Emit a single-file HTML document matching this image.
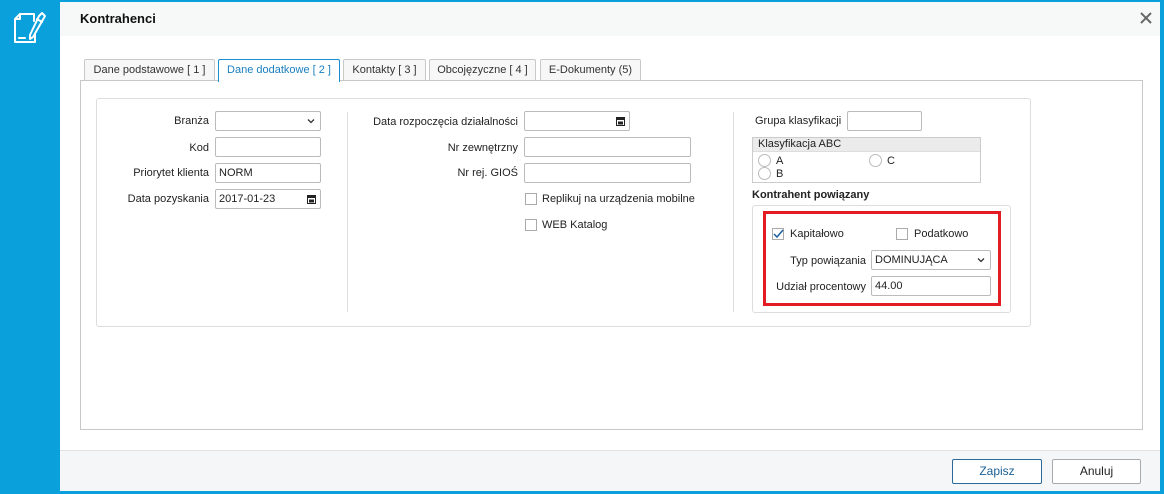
<!DOCTYPE html><html><head><meta charset="utf-8"><style>
*{box-sizing:border-box;margin:0;padding:0}
body{width:1164px;height:494px;background:#0aa0dc;font-family:"Liberation Sans",sans-serif;font-size:11px;color:#222;position:relative;overflow:hidden}
.a{position:absolute}
.win{left:60px;top:2px;width:1100px;height:489px;background:#fff}
.hdr{left:60px;top:2px;width:1100px;height:34px;background:#f7f8f8}
.ftr{left:60px;top:450px;width:1100px;height:41px;background:#f5f6f7;border-top:1px solid #e2e2e2}
.tab{top:59px;height:22px;border:1px solid #c8c8c8;border-bottom:none;background:#f7f7f7;font-size:11px;color:#333;text-align:center;line-height:21px;border-radius:2px 2px 0 0}
.in{height:20px;border:1px solid #bbb;border-radius:2px;background:#fff;font-size:11px;line-height:18px;padding-left:3px}
.lb{text-align:right;font-size:11px}
.cb{width:12px;height:12px;border:1px solid #aaa;background:#fff}
.rd{width:13px;height:13px;border:1px solid #bbb;border-radius:50%}
.btn{top:459px;height:25px;border:1px solid #aaa;border-radius:2px;text-align:center;line-height:23px;font-size:12px;background:#fff}
.ch{position:absolute;right:5px;top:6px}
.cal{position:absolute;right:4px;top:5px}
</style></head><body>
<div class="a win"></div><div class="a hdr"></div>
<svg class="a" style="left:0;top:0" width="60" height="50" viewBox="0 0 60 50" fill="none" stroke="#fff" stroke-width="2" stroke-linejoin="round" stroke-linecap="round"><path d="M15 19 L20 14 H34 V21"/><path d="M15 19 V42 H35 V34"/><path d="M15 19 H20 V14"/><path d="M19 38 H25"/><path d="M39 16 L42 13 L45 16 L33 37 L30 39 L30 35 Z"/><path d="M37 19 L42 22"/></svg>
<div class="a" style="left:80px;top:11px;font-size:13px;font-weight:bold;color:#111">Kontrahenci</div>
<svg class="a" style="left:1140px;top:12px" width="12" height="12" viewBox="0 0 12 12" stroke="#666" stroke-width="2"><path d="M1 1 L11 11 M11 1 L1 11"/></svg>
<div class="a tab" style="left:84px;width:131px">Dane podstawowe [ 1 ]</div>
<div class="a tab" style="left:218px;width:122px;background:#fff;color:#1a7fbf;border-color:#1a8fcf;height:23px;z-index:2">Dane dodatkowe [ 2 ]</div>
<div class="a tab" style="left:343px;width:83px">Kontakty [ 3 ]</div>
<div class="a tab" style="left:429px;width:107px">Obcojęzyczne [ 4 ]</div>
<div class="a tab" style="left:540px;width:101px">E-Dokumenty (5)</div>
<div class="a" style="left:80px;top:80px;width:1063px;height:350px;border:1px solid #c8c8c8"></div>
<div class="a" style="left:96px;top:98px;width:935px;height:229px;border:1px solid #ddd;border-radius:3px"></div>
<div class="a" style="left:347px;top:112px;width:1px;height:200px;background:#ddd"></div>
<div class="a" style="left:733px;top:112px;width:1px;height:200px;background:#ddd"></div>
<div class="a lb" style="left:100px;width:109px;top:115px">Branża</div>
<div class="a in" style="left:215px;top:111px;width:106px"><svg class="ch" width="8" height="6" viewBox="0 0 8 6" fill="none" stroke="#333" stroke-width="1.3"><path d="M1 1.5 L4 4.5 L7 1.5"/></svg></div>
<div class="a lb" style="left:100px;width:109px;top:142px">Kod</div>
<div class="a in" style="left:215px;top:137px;width:106px"></div>
<div class="a lb" style="left:100px;width:109px;top:167px">Priorytet klienta</div>
<div class="a in" style="left:215px;top:163px;width:106px">NORM</div>
<div class="a lb" style="left:100px;width:109px;top:193px">Data pozyskania</div>
<div class="a in" style="left:215px;top:189px;width:106px">2017-01-23<svg class="cal" width="9" height="9" viewBox="0 0 9 9"><rect x="0.5" y="0.5" width="8" height="8" fill="none" stroke="#222"/><rect x="0.5" y="0.5" width="8" height="2.5" fill="#222"/><rect x="2" y="4.5" width="5" height="3" fill="#222"/></svg></div>
<div class="a lb" style="left:350px;width:168px;top:116px">Data rozpoczęcia działalności</div>
<div class="a in" style="left:524px;top:111px;width:106px"><svg class="cal" width="9" height="9" viewBox="0 0 9 9"><rect x="0.5" y="0.5" width="8" height="8" fill="none" stroke="#222"/><rect x="0.5" y="0.5" width="8" height="2.5" fill="#222"/><rect x="2" y="4.5" width="5" height="3" fill="#222"/></svg></div>
<div class="a lb" style="left:350px;width:168px;top:142px">Nr zewnętrzny</div>
<div class="a in" style="left:524px;top:137px;width:167px"></div>
<div class="a lb" style="left:350px;width:168px;top:167px">Nr rej. GIOŚ</div>
<div class="a in" style="left:524px;top:163px;width:167px"></div>
<div class="a cb" style="left:525px;top:193px"></div><div class="a" style="left:542px;top:193px">Replikuj na urządzenia mobilne</div>
<div class="a cb" style="left:525px;top:219px"></div><div class="a" style="left:542px;top:219px">WEB Katalog</div>
<div class="a" style="left:755px;top:115px">Grupa klasyfikacji</div>
<div class="a in" style="left:847px;top:111px;width:75px"></div>
<div class="a" style="left:752px;top:137px;width:229px;height:46px;border:1px solid #ccc"><div style="background:#ebebeb;height:14px;line-height:13px;padding-left:5px;border-bottom:1px solid #ddd">Klasyfikacja ABC</div></div>
<div class="a rd" style="left:758px;top:154px"></div><div class="a" style="left:776px;top:155px">A</div>
<div class="a rd" style="left:869px;top:154px"></div><div class="a" style="left:887px;top:155px">C</div>
<div class="a rd" style="left:758px;top:167px"></div><div class="a" style="left:776px;top:168px">B</div>
<div class="a" style="left:752px;top:189px;font-weight:bold">Kontrahent powiązany</div>
<div class="a" style="left:752px;top:205px;width:259px;height:108px;border:1px solid #ddd;border-radius:3px"></div>
<div class="a" style="left:763px;top:211px;width:238px;height:95px;border:3px solid #e31b23"></div>
<div class="a cb" style="left:772px;top:228px"></div><svg class="a" style="left:773px;top:229px" width="11" height="10" viewBox="0 0 11 10" fill="none" stroke="#1a5fa0" stroke-width="1.5"><path d="M1 5 L4 8 L10 1"/></svg><div class="a" style="left:790px;top:228px">Kapitałowo</div>
<div class="a cb" style="left:896px;top:228px"></div><div class="a" style="left:914px;top:228px">Podatkowo</div>
<div class="a lb" style="left:765px;width:101px;top:255px">Typ powiązania</div>
<div class="a in" style="left:871px;top:250px;width:120px">DOMINUJĄCA<svg class="ch" width="8" height="6" viewBox="0 0 8 6" fill="none" stroke="#333" stroke-width="1.3"><path d="M1 1.5 L4 4.5 L7 1.5"/></svg></div>
<div class="a lb" style="left:765px;width:101px;top:281px">Udział procentowy</div>
<div class="a in" style="left:871px;top:276px;width:120px">44.00</div>
<div class="a ftr"></div>
<div class="a btn" style="left:952px;width:90px;border-color:#2a6a9a;color:#1a5f95">Zapisz</div>
<div class="a btn" style="left:1052px;width:89px">Anuluj</div>
</body></html>
